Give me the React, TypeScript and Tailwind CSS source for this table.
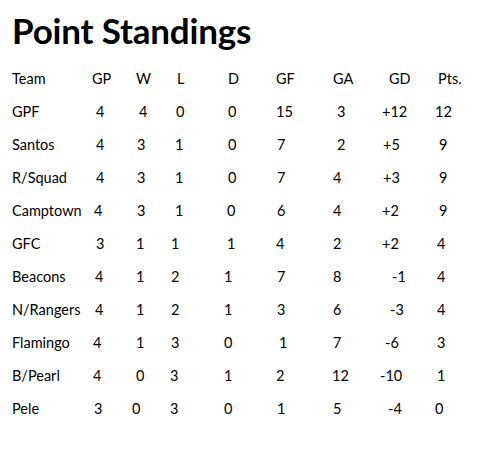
import React from 'react';

type Row = { cells: string[]; xs: number[] };

// left edge of each cell's text, in px from the page edge (tab stops drift per row, as in the doc)
const rows: Row[] = [
  { cells: ['Team', 'GP', 'W', 'L', 'D', 'GF', 'GA', 'GD', 'Pts.'], xs: [12, 92, 136, 177, 228, 276, 333, 389, 438] },
  { cells: ['GPF', '4', '4', '0', '0', '15', '3', '+12', '12'], xs: [12, 96, 139, 176, 228, 276, 337, 382, 435] },
  { cells: ['Santos', '4', '3', '1', '0', '7', '2', '+5', '9'], xs: [12, 96, 137, 175, 228, 277, 337, 383, 439] },
  { cells: ['R/Squad', '4', '3', '1', '0', '7', '4', '+3', '9'], xs: [12, 96, 137, 175, 228, 277, 333, 383, 439] },
  { cells: ['Camptown', '4', '3', '1', '0', '6', '4', '+2', '9'], xs: [12, 94, 137, 175, 227, 277, 333, 382, 439] },
  { cells: ['GFC', '3', '1', '1', '1', '4', '2', '+2', '4'], xs: [12, 96, 136, 171, 227, 276, 333, 382, 437] },
  { cells: ['Beacons', '4', '1', '2', '1', '7', '8', '-1', '4'], xs: [12, 95, 136, 171, 224, 277, 333, 392, 437] },
  { cells: ['N/Rangers', '4', '1', '2', '1', '3', '6', '-3', '4'], xs: [12, 95, 136, 171, 224, 277, 333, 390, 437] },
  { cells: ['Flamingo', '4', '1', '3', '0', '1', '7', '-6', '3'], xs: [12, 93, 136, 171, 224, 279, 333, 385, 437] },
  { cells: ['B/Pearl', '4', '0', '3', '1', '2', '12', '-10', '1'], xs: [12, 93, 136, 170, 224, 276, 332, 380, 437] },
  { cells: ['Pele', '3', '0', '3', '0', '1', '5', '-4', '0'], xs: [12, 94, 132, 170, 224, 277, 333, 388, 435] },
];

const StandingsRow: React.FC<{ row: Row }> = ({ row }) => (
  <div className="flex h-[33px] items-center whitespace-nowrap">
    {row.cells.map((c, i) => {
      const next = row.xs[i + 1];
      return (
        <span
          key={i}
          className="shrink-0"
          style={next !== undefined ? { width: `${next - row.xs[i]}px` } : undefined}
        >
          {c}
        </span>
      );
    })}
  </div>
);

export default function App() {
  return (
    <div
      className="w-[494px] h-[455px] bg-white text-black pl-[12px] pt-[10px]"
      style={{ fontFamily: 'Lato, "Open Sans", sans-serif' }}
    >
      <h1 className="text-[35px] leading-[40px] font-bold tracking-[-0.2px]">Point Standings</h1>
      <div className="mt-[12px] text-[14.5px]">
        {rows.map((r, i) => (
          <StandingsRow key={i} row={r} />
        ))}
      </div>
    </div>
  );
}
